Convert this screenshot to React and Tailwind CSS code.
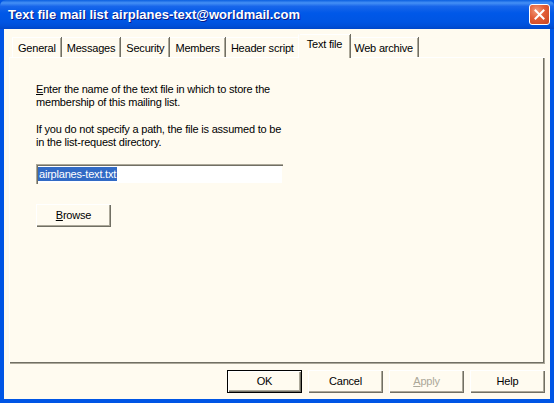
import React from "react";

const F = "font-['Liberation_Sans',Arial,sans-serif]";

function Tab({ label, selected, first }) {
  if (selected) {
    return (
      <div className="relative z-10 -mb-[1px] -ml-[2px] -mr-[1px] flex h-[24px] items-start border-l border-t border-white bg-[#fffbf0] px-[8px] pt-[3px] shadow-[inset_-1px_0_0_#aca899,1px_0_0_#716f64] rounded-tl-[2px]">
        <span>{label}</span>
      </div>
    );
  }
  return (
    <div className={`flex h-[20px] items-start border-t border-white ${first ? "border-l" : ""} px-[5px] pt-[4px] shadow-[inset_-1px_0_0_#aca899,1px_0_0_#716f64] mr-[1px]`}>
      <span>{label}</span>
    </div>
  );
}

function Btn({ children, def, disabled, w = "w-[75px]" }) {
  return (
    <button
      className={`${w} h-[23px] bg-[#fffbf0] text-[11px] tracking-[-0.2px] ${disabled ? "text-[#aca899]" : "text-black"} ${
        def
          ? "border border-black shadow-[inset_1px_1px_0_#fff,inset_-1px_-1px_0_#716f64,inset_-2px_-2px_0_#aca899]"
          : "shadow-[inset_1px_1px_0_#fff,inset_-1px_-1px_0_#716f64,inset_-2px_-2px_0_#aca899]"
      } flex items-center justify-center`}
    >
      {children}
    </button>
  );
}

export default function App() {
  const tabs = ["General", "Messages", "Security", "Members", "Header script", "Text file", "Web archive"];
  return (
    <div className={`${F} flex h-[403px] w-[554px] flex-col overflow-hidden bg-[#0055e5]`}>
      {/* Title bar */}
      <div className="flex h-[29px] shrink-0 items-center justify-between pl-[8px] pr-[4px] bg-[linear-gradient(to_bottom,#0a5fe0_0%,#4590f5_10%,#1866ea_22%,#0058e8_45%,#0055e3_75%,#004fd8_90%,#0046c8_100%)] rounded-t-[6px]">
        <span className="text-[13px] font-bold leading-none text-white [text-shadow:1px_1px_0_#0a1883]">
          Text file mail list airplanes-text@worldmail.com
        </span>
        <div className="flex h-[21px] w-[21px] items-center justify-center rounded-[3px] border border-white bg-[radial-gradient(circle_at_35%_30%,#f29b7a_0%,#e25c36_45%,#c94420_100%)]">
          <svg width="11" height="11" viewBox="0 0 11 11">
            <path d="M1.5 1.5 L9.5 9.5 M9.5 1.5 L1.5 9.5" stroke="white" strokeWidth="2" strokeLinecap="square" />
          </svg>
        </div>
      </div>

      {/* Client area */}
      <div className="mx-[4px] mb-[4px] flex flex-1 flex-col bg-[#fffbf0] px-[5px] text-[11px] leading-[13px] tracking-[-0.2px] text-black">
        {/* Tabs */}
        <div className="mt-[8px] flex h-[20px] items-end pl-[3px]">
          {tabs.map((t, i) => (
            <Tab key={t} label={t} first={i === 0} selected={t === "Text file"} />
          ))}
        </div>

        {/* Panel */}
        <div className="flex h-[307px] flex-col border-l border-t border-white pl-[26px] pt-[25px] shadow-[inset_-1px_-1px_0_#aca899,inset_-2px_-2px_0_#716f64]">
          <p>
            <span className="underline">E</span>nter the name of the text file in which to store the
            <br />
            membership of this mailing list.
          </p>
          <p className="mt-[14px]">
            If you do not specify a path, the file is assumed to be
            <br />
            in the list-request directory.
          </p>
          <div className="mt-[15px] flex h-[20px] w-[247px] items-center bg-white pl-[2px] shadow-[inset_1px_1px_0_#aca899,inset_2px_2px_0_#716f64,inset_-1px_-1px_0_#fffbf0]">
            <span className="bg-[#316ac5] px-[1px] leading-[14px] text-white">airplanes-text.txt</span>
          </div>
          <div className="mt-[20px]">
            <Btn>
              <span className="underline">B</span>rowse
            </Btn>
          </div>
        </div>

        {/* Bottom buttons */}
        <div className="mt-[6px] flex justify-end gap-[6px]">
          <Btn def>OK</Btn>
          <Btn>Cancel</Btn>
          <Btn disabled>
            <span className="underline">A</span>pply
          </Btn>
          <Btn>Help</Btn>
        </div>
      </div>
    </div>
  );
}
